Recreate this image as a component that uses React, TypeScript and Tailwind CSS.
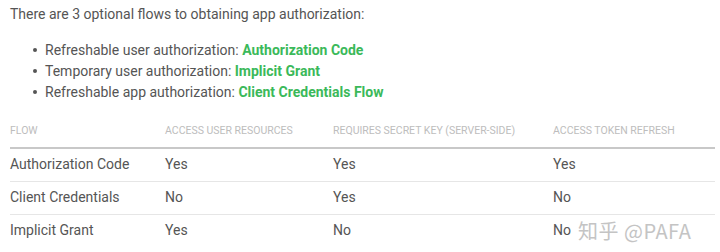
import React from "react";

const flows = [
  { label: "Refreshable user authorization: ", name: "Authorization Code" },
  { label: "Temporary user authorization: ", name: "Implicit Grant" },
  { label: "Refreshable app authorization: ", name: "Client Credentials Flow" },
];

const rows = [
  ["Authorization Code", "Yes", "Yes", "Yes"],
  ["Client Credentials", "No", "Yes", "No"],
  ["Implicit Grant", "Yes", "No", "No"],
];

const headers = ["FLOW", "ACCESS USER RESOURCES", "REQUIRES SECRET KEY (SERVER-SIDE)", "ACCESS TOKEN REFRESH"];

export default function App() {
  return (
    <div className="relative w-[720px] h-[252px] bg-white overflow-hidden font-['Roboto',sans-serif] text-[#555]">
      <div className="pl-[10px] pt-[4px]">
        <p className="text-[14px] leading-[20px]">There are 3 optional flows to obtaining app authorization:</p>
        <ul className="mt-[16px] pl-[23px]">
          {flows.map((f) => (
            <li key={f.name} className="text-[14px] leading-[21px]">
              <span className="inline-block w-[4px] h-[4px] mr-[8px] mb-[3px] rounded-full bg-[#555] align-middle" />
              {f.label}
              <span className="font-bold text-[#3bb95a]">{f.name}</span>
            </li>
          ))}
        </ul>
      </div>
      <table className="ml-[10px] mt-[11px] w-[705px] table-fixed border-collapse text-left">
        <colgroup>
          <col className="w-[155px]" />
          <col className="w-[168px]" />
          <col className="w-[220px]" />
          <col />
        </colgroup>
        <thead>
          <tr className="border-b-2 border-[#c8c8c8]">
            {headers.map((h) => (
              <th key={h} className="h-[34px] p-0 align-middle text-[10.5px] font-normal text-[#bdbdbd]">{h}</th>
            ))}
          </tr>
        </thead>
        <tbody>
          {rows.map((r, i) => (
            <tr key={r[0]} className={i < rows.length - 1 ? "border-b border-[#e6e6e6]" : ""}>
              {r.map((c, j) => (
                <td key={j} className="h-[33px] p-0 align-middle text-[14px]">{c}</td>
              ))}
            </tr>
          ))}
        </tbody>
      </table>
      <div className="absolute left-[578px] top-[216px] text-[20px] text-[#c4c4c4] font-['Noto_Sans_CJK_SC',sans-serif] tracking-[0.5px]">知乎 @PAFA</div>
    </div>
  );
}
